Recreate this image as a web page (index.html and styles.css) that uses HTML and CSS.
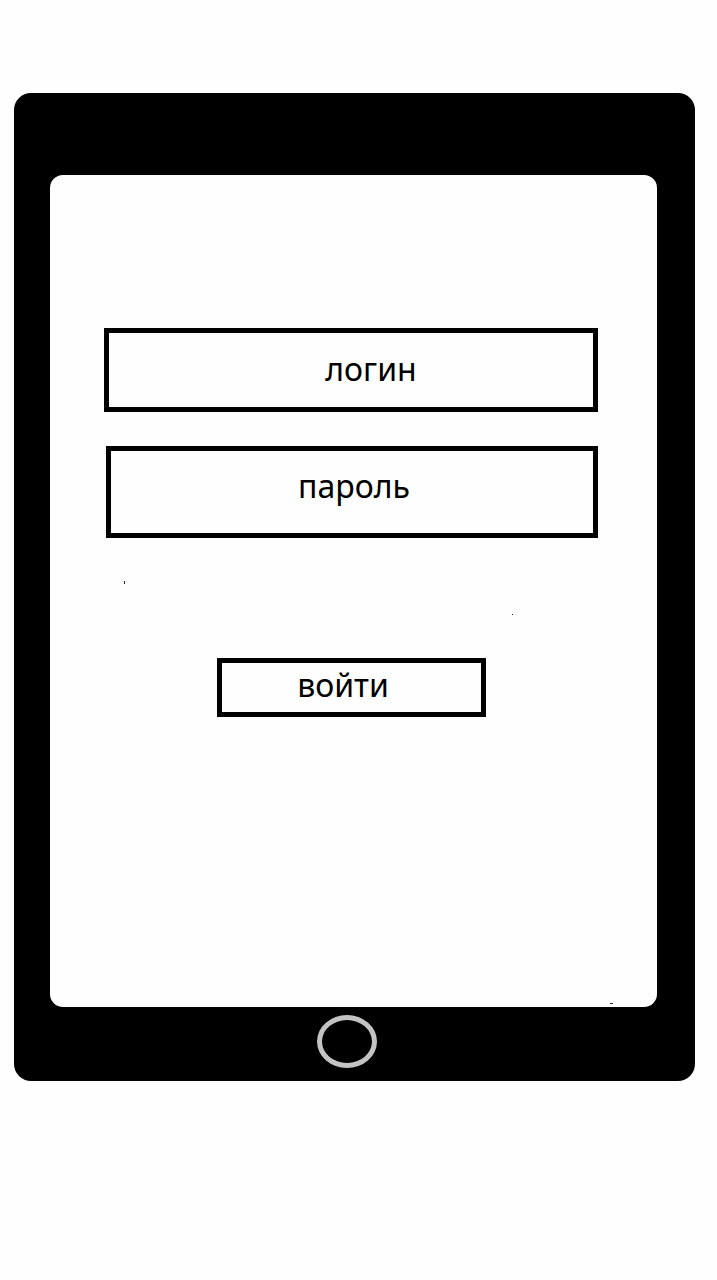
FILE: index.html
```html
<!DOCTYPE html>
<html lang="ru">
<head>
<meta charset="utf-8">
<meta name="viewport" content="width=device-width, initial-scale=1">
<title>Вход</title>
<link rel="stylesheet" href="styles.css">
</head>
<body>
<main class="tablet">
  <section class="screen">
    <form class="login">
      <input class="field field-login" type="text" placeholder="логин" aria-label="логин">
      <input class="field field-password" type="password" placeholder="пароль" aria-label="пароль">
      <button class="submit" type="button">войти</button>
    </form>
    <span class="speck speck-left"></span>
    <span class="speck speck-right"></span>
    <span class="speck speck-bottom"></span>
  </section>
  <footer class="bezel">
    <button class="home" type="button" aria-label="Домой"></button>
  </footer>
</main>
</body>
</html>
```
FILE: styles.css
```css
* {
  box-sizing: border-box;
}

body {
  margin: 0;
  padding: 93px 22px 93px 14px;
  background: #fefefe;
  color: #000;
  font-family: "Noto Sans", "Open Sans", sans-serif;
}

.tablet {
  padding: 82px 38px 0 36px;
  border-radius: 17px;
  background: #000;
}

.screen {
  position: relative;
  padding: 153px 59px 290px 54px;
  border-radius: 13px;
  background: #fefefe;
}

.login {
  display: flex;
  flex-direction: column;
}

.field,
.submit {
  border: 5px solid #000;
  border-radius: 0;
  background: #fefefe;
  color: #000;
  font: inherit;
  font-size: 32px;
  line-height: 44px;
  text-align: center;
}

.field::placeholder {
  color: #000;
  opacity: 1;
}

.field-login {
  height: 84px;
  padding: 0 0 4px 40px;
}

.field-password {
  height: 92px;
  margin: 34px 0 0 2px;
  padding: 0 0 14px 4px;
}

.submit {
  align-self: center;
  width: 269px;
  height: 59px;
  margin-top: 120px;
  padding: 0 16px 6px 0;
}

.speck {
  position: absolute;
  background: #222;
}

.speck-left {
  top: 406px;
  left: 74px;
  width: 1px;
  height: 3px;
}

.speck-right {
  top: 439px;
  right: 144px;
  width: 1px;
  height: 1px;
}

.speck-bottom {
  right: 44px;
  bottom: 3px;
  width: 3px;
  height: 1px;
}

.bezel {
  display: flex;
  justify-content: center;
  padding: 8px 14px 13px 0;
}

.home {
  width: 60px;
  height: 53px;
  padding: 0;
  border: 5px solid #c3c3c3;
  border-radius: 50%;
  background: #000;
}
```
